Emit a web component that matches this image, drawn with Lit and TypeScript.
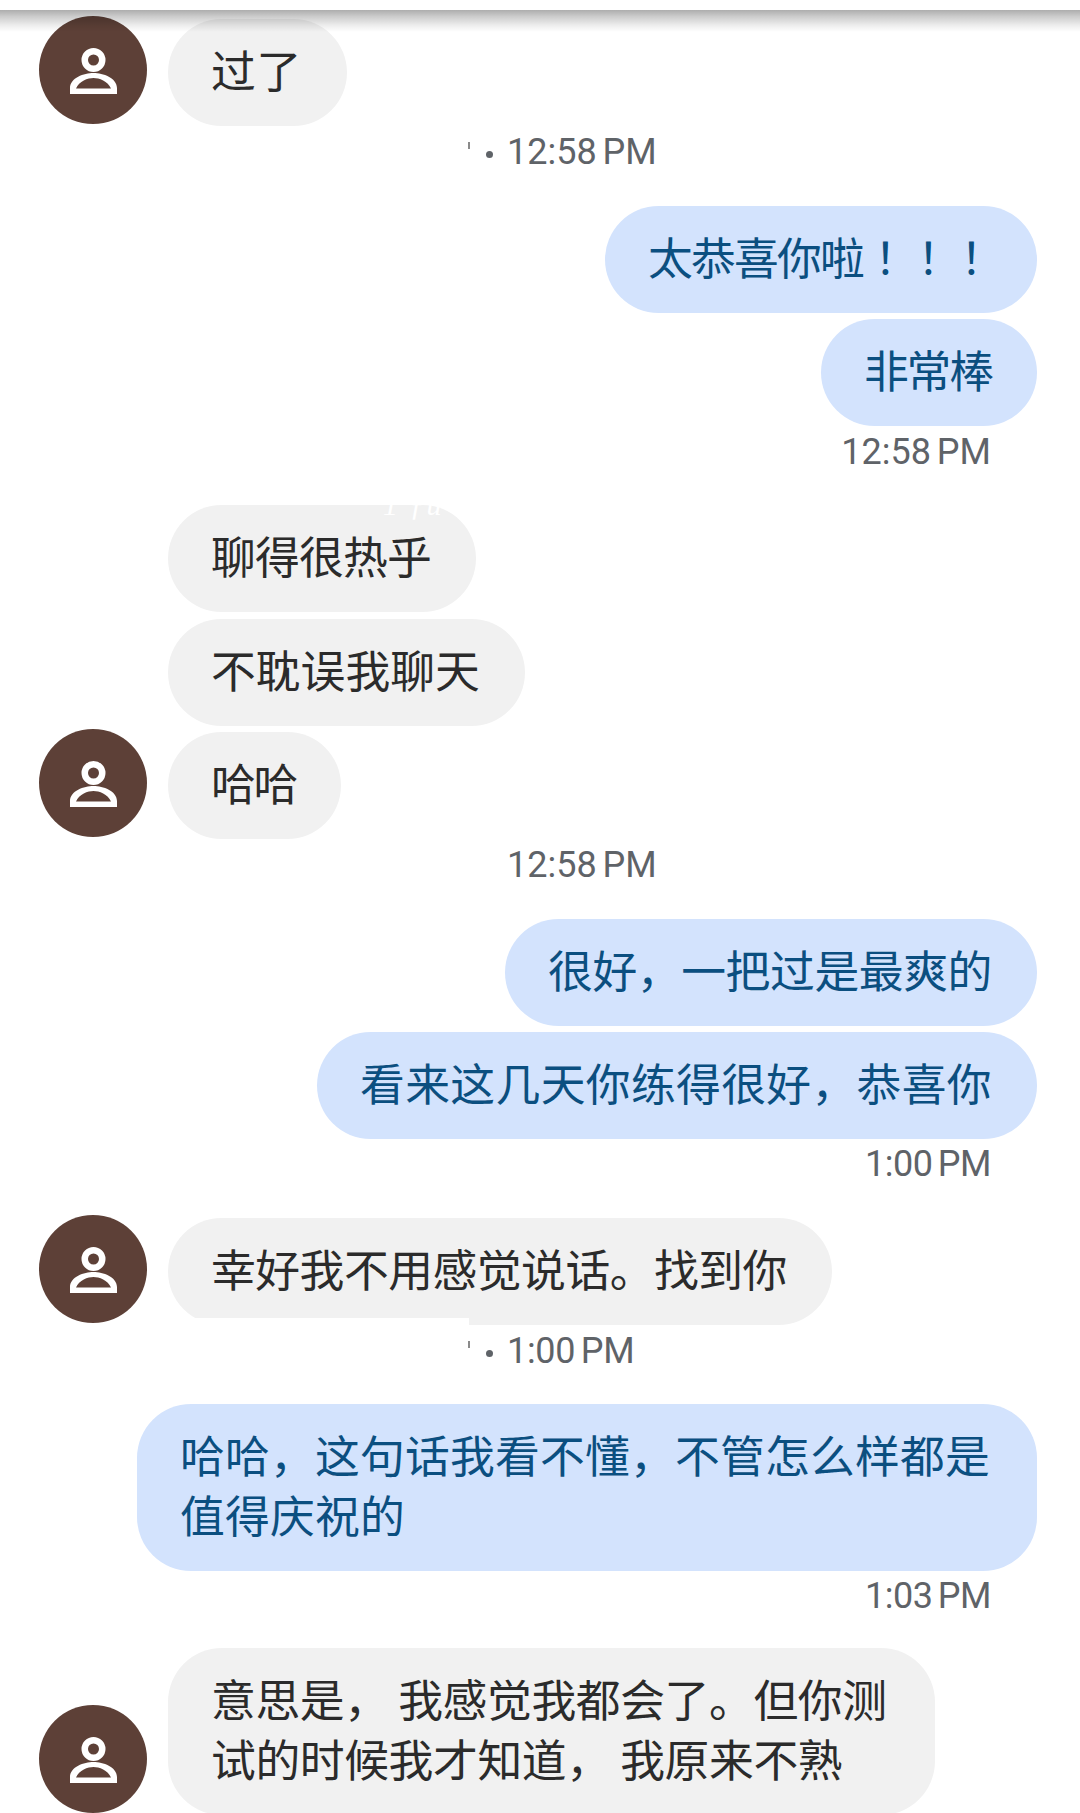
import { LitElement, html, css, nothing } from "lit";
import { customElement } from "lit/decorators.js";

@customElement("chat-avatar")
class ChatAvatar extends LitElement {
  static styles = css`
    :host { display: block; width: 108px; height: 108px; flex: none; }
    svg { width: 108px; height: 108px; display: block; }
  `;
  render() {
    return html`<svg viewBox="0 0 108 108"><circle cx="54" cy="54" r="54" fill="#5d4037"/><path fill="#fff" fill-rule="evenodd" d="M54.500 32a12 12 0 1 1 0 24 12 12 0 0 1 0-24Zm0 6.500a5.500 5.500 0 1 0 0 11 5.500 5.500 0 0 0 0-11Z"/><path fill="#fff" fill-rule="evenodd" d="M31 78V72C31 62 45 57 54.500 57S78 62 78 72V78ZM37 72.500H72C69 65 60 62 54.500 62S40 65 37 72.500Z"/></svg>`;
  }
}

type Msg =
  | { k: "in" | "out" | "av"; top: number; ls: number; lines: string[]; w?: number; bang?: string }
  | { k: "ts" | "tsmid" | "tsc"; top: number; t: string; ls?: number };

const MSGS: Msg[] = [
  { k: "av", top: 0, ls: 0.7, lines: ["过了"] },
  { k: "tsmid", top: 5.5, t: "12:58 PM" },
  { k: "out", top: 34, ls: -1.8, lines: ["太恭喜你啦"], bang: "！！！" },
  { k: "out", top: 6.5, ls: -2.1, lines: ["非常棒"] },
  { k: "ts", top: 5.5, t: "12:58 PM" },
  { k: "in", top: 33.5, ls: -0.8, lines: ["聊得很热乎"] },
  { k: "in", top: 6.5, ls: 0, lines: ["不耽误我聊天"] },
  { k: "av", top: 3.5, ls: -2.3, lines: ["哈哈"] },
  { k: "tsc", top: 5.5, t: "12:58 PM" },
  { k: "out", top: 34, ls: -0.4, lines: ["很好，一把过是最爽的"] },
  { k: "out", top: 6, ls: 0.34, lines: ["看来这几天你练得很好，恭喜你"] },
  { k: "ts", top: 5, t: "1:00 PM", ls: -0.5 },
  { k: "av", top: 31, ls: -0.5, lines: ["幸好我不用感觉说话。找到你"] },
  { k: "tsmid", top: 6.5, t: "1:00 PM", ls: -0.3 },
  { k: "out", top: 33, ls: 0.2, w: 900, lines: ["哈哈，这句话我看不懂，不管怎么样都是", "值得庆祝的"] },
  { k: "ts", top: 4.5, t: "1:03 PM", ls: -0.5 },
  { k: "av", top: 32.5, ls: -0.4, w: 767, lines: ["意思是， 我感觉我都会了。但你测", "试的时候我才知道， 我原来不熟"] },
];

@customElement("app-root")
export class AppRoot extends LitElement {
  static styles = css`
    :host { display: block; width: 1080px; height: 1813px; overflow: hidden; position: relative; background: #fff;
      font-family: "Noto Sans CJK SC", "Liberation Sans", sans-serif; }
    .top { position: absolute; left: 0; right: 0; top: 0; height: 10px; background: #fff; z-index: 5; }
    .top::after { content: ""; position: absolute; left: 0; right: 0; top: 100%; height: 22px;
      background: linear-gradient(to bottom, rgba(0,0,0,.32), rgba(0,0,0,.2) 30%, rgba(0,0,0,.07) 70%, rgba(0,0,0,0)); }
    .list { display: flex; flex-direction: column; padding: 16px 43px 0 39px; }
    .row { display: flex; align-items: flex-end; }
    .row.in { padding-left: 129px; }
    .row.av { gap: 21px; }
    .row.av chat-avatar { margin-bottom: 2px; }
    .row.out { justify-content: flex-end; }
    .b { font-size: 44.8px; line-height: 60px; padding: 20px 45px 27px 43px; border-radius: 54px; box-sizing: border-box; white-space: nowrap; }
    .in .b, .av .b { background: #f1f1f1; color: #2b2b2b; }
    .out .b { background: #d3e3fd; color: #0b4f80; }
    .bang { font-family: "Noto Sans CJK TC", "Liberation Sans", sans-serif; }
    .ts { font-family: "Roboto", "Liberation Sans", sans-serif; font-size: 36px; line-height: 40px; color: #5f6368; word-spacing: -3px; }
    .ts.right { text-align: right; padding-right: 46px; }
    .ts.center { padding-left: 468px; }
    .ts.mid { padding-left: 429px; display: flex; align-items: center; }
    .frag { width: 2px; height: 7px; margin-top: -13px; background: #8a8a8a; }
    .dot { width: 7px; height: 7px; border-radius: 50%; background: #5f6368; margin: 5px 14px 0 16px; }
    .patch { position: absolute; left: 168px; width: 301px; top: 1318px; height: 9px; background: #fff; }
    .ghost { position: absolute; left: 383px; top: 490px; font: italic 30px/30px "Liberation Serif", serif; color: #fff; white-space: nowrap; letter-spacing: 2px; }
  `;
  private bubble(m: Extract<Msg, { lines: string[] }>) {
    const style = `margin-top:${m.top}px`;
    const inner = `letter-spacing:${m.ls}px;${m.w ? `width:${m.w}px` : ""}`;
    return html`<div class="row ${m.k}" style=${style}>
      ${m.k === "av" ? html`<chat-avatar></chat-avatar>` : nothing}
      <div class="b" style=${inner}>${m.lines.map((l, i) => html`${i ? html`<br />` : nothing}${l}`)}${m.bang ? html`<span class="bang">${m.bang}</span>` : nothing}</div>
    </div>`;
  }
  private stamp(m: Extract<Msg, { t: string }>) {
    const style = `margin-top:${m.top}px;letter-spacing:${m.ls ?? 0}px`;
    if (m.k === "tsmid") {
      return html`<div class="ts mid" style=${style}><span class="frag"></span><span class="dot"></span><span>${m.t}</span></div>`;
    }
    return html`<div class="ts ${m.k === "ts" ? "right" : "center"}" style=${style}>${m.t}</div>`;
  }
  render() {
    return html`
      <div class="top"></div>
      <div class="list">
        ${MSGS.map((m) => ("lines" in m ? this.bubble(m) : this.stamp(m)))}
      </div>
      <div class="patch"></div>
      <div class="ghost">1 ƒu</div>
    `;
  }
}
